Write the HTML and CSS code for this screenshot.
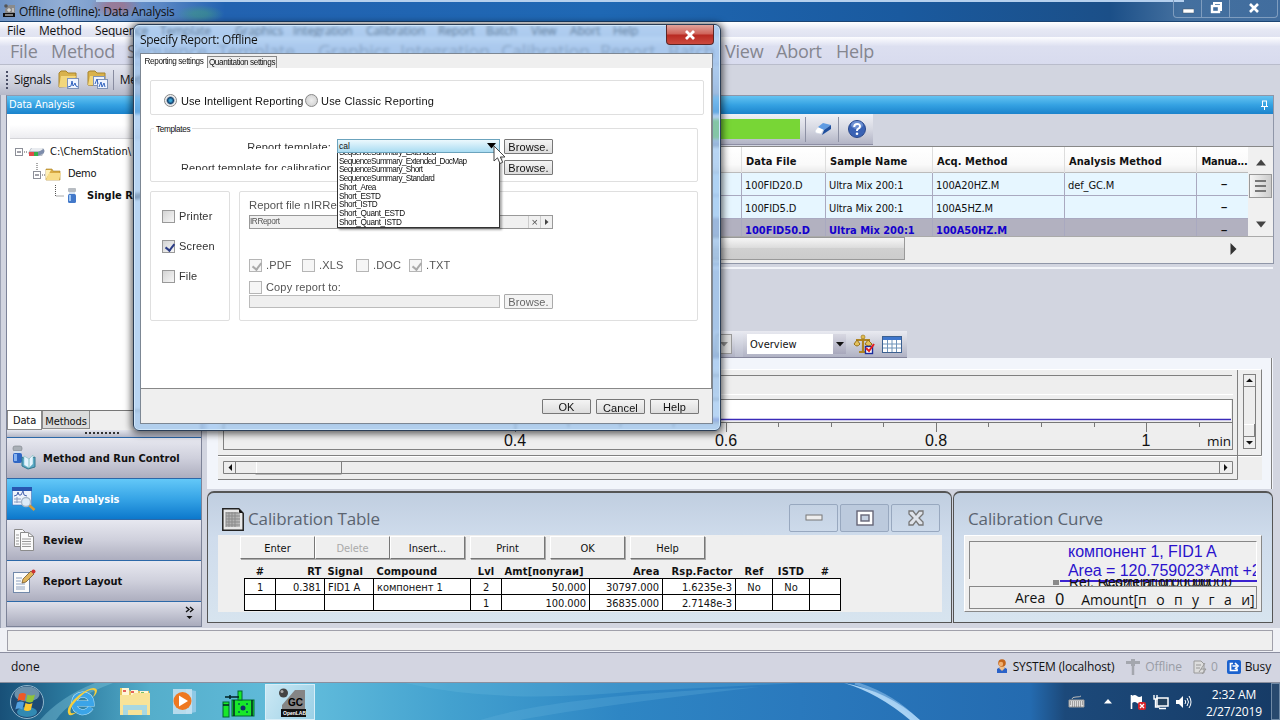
FILE: index.html
```html
<!DOCTYPE html>
<html lang="en">
  <head>
    <meta charset="UTF-8" />
    <title>Offline (offline): Data Analysis</title>
    <link rel="stylesheet" href="styles.css">
  </head>
  <body>
    <header class="titlebar">
      <svg class="app-icon" width="13" height="14" viewBox="0 0 13 14">
        <path d="M2 9V5l4-4h6v8z" fill="#8a8a8a"/><circle cx="3" cy="2" r="1.8" fill="#555"/>
        <rect x="0" y="9" width="12" height="4" fill="#111"/><path d="M2 11h8M5 5h2v2H5zM9 5h2M9 7h2" stroke="#eee" fill="none"/>
      </svg>
      <span class="app-title">Offline (offline): Data Analysis</span>
      <div class="win-buttons">
        <span class="wb"><svg width="12" height="14"><rect x="1" y="8" width="11" height="4" fill="#fff" stroke="#456"  stroke-width=".5"/></svg></span>
        <span class="wb"><svg width="14" height="14"><path d="M5 4V2h7v7h-2" fill="none" stroke="#fff" stroke-width="2"/><rect x="3" y="5" width="7" height="6" fill="none" stroke="#fff" stroke-width="2.4"/></svg></span>
        <span class="wb wb-close"><svg width="12" height="14"><path d="M2 3l8 8M10 3l-8 8" stroke="#fff" stroke-width="2.6"/></svg></span>
      </div>
    </header>

    <nav class="menu">
      <span>File</span><span>Method</span><span>Sequence</span><span>Template</span><span>Graphics</span><span>Integration</span><span>Calibration</span><span>Report</span><span>Batch</span><span>View</span><span>Abort</span><span>Help</span>
    </nav>
    <nav class="menu-large">
      <span>File</span><span>Method</span><span>Sequence</span><span>Template</span><span>Graphics</span><span>Integration</span><span>Calibration</span><span>Report</span><span>Batch</span><span>View</span><span>Abort</span><span>Help</span>
    </nav>

    <div class="toolbar">
      <span class="grip"></span>
      <span class="tb-label">Signals</span>
      <svg width="22" height="20" viewBox="0 0 22 20">
        <path d="M1 17V3l2-2h5l2 2h8v13z" fill="#d9b24c" stroke="#a8842c"/><path d="M3 6h15l-3 11H1z" fill="#f3d77c"/>
        <rect x="9.500" y="8.500" width="11" height="10" fill="#eef4ff" stroke="#7f93b8"/><path d="M10 17l3-1 1-5 1 5 1-1 1-2 1 3 2 1" fill="none" stroke="#3465c0"/>
      </svg>
      <svg width="22" height="20" viewBox="0 0 22 20">
        <path d="M1 15V2l2-1h5l2 2h8v13z" fill="#d9b24c" stroke="#a8842c"/><path d="M3 6h15l-3 9H1z" fill="#f3d77c"/>
        <rect x="6.500" y="6.500" width="11" height="9" fill="#eef4ff" stroke="#7f93b8"/><rect x="10.500" y="9.500" width="10" height="9" fill="#eef4ff" stroke="#7f93b8"/><path d="M8 14l2-5 1 5M12 17l2-5 1 5 2-4 1 4" fill="none" stroke="#3465c0"/>
      </svg>
      <span class="tb-sep"></span>
      <span class="tb-label">Method</span>
    </div>

    <main class="workspace">
      <aside class="sidebar">
        <div class="panel-head">Data Analysis</div>
        <div class="tree">
          <div class="tree-filter"></div>
          <div class="node">
            <svg width="32" height="16" viewBox="0 0 32 16">
              <rect x="1.500" y="4.500" width="7" height="7" fill="#fff" stroke="#8c8f98"/><path d="M3 8h4" stroke="#445"/><path d="M10 8h4" stroke="#555" stroke-dasharray="1 1"/>
              <path d="M14 9l3-5h12l2 3-3 5H16z" fill="#b8bec8"/><path d="M18 4h11l-2 3H16z" fill="#e9ecf0"/><rect x="15" y="8" width="5" height="4" fill="#e24b4b"/><rect x="20" y="8" width="4" height="4" fill="#36b14a"/><path d="M24 12V8l6-3v4z" fill="#7d8cab"/>
            </svg><span>C:\ChemStation\</span>
          </div>
          <div class="node node-2">
            <svg width="30" height="22" viewBox="0 0 30 22">
              <path d="M5 0v8" stroke="#555" stroke-dasharray="1 1"/><rect x="1.500" y="8.500" width="7" height="7" fill="#fff" stroke="#8c8f98"/><path d="M3 12h4" stroke="#445"/><path d="M10 12h4" stroke="#555" stroke-dasharray="1 1"/>
              <path d="M14 17V6h6l1 2h7v9z" fill="#d9ab45" stroke="#a87f24" stroke-width=".6"/><path d="M14 17l3-7h12l-2 7z" fill="#f8dc88"/><path d="M14 16V7h5z" fill="#fff0b5"/>
            </svg><span>Demo</span>
          </div>
          <div class="node node-3">
            <svg width="24" height="22" viewBox="0 0 24 22">
              <path d="M1.500 0v11h8" fill="none" stroke="#555" stroke-dasharray="1 1"/>
              <rect x="14" y="3" width="8" height="4" rx="1" fill="#b7bcc2"/><rect x="15" y="7" width="6" height="3" fill="#d8e4f2"/><rect x="14" y="9" width="8" height="9" rx="1.500" fill="#4278c9"/><rect x="15" y="10" width="2" height="6" fill="#9cc4f2"/>
            </svg><b>Single Runs</b>
          </div>
        </div>
        <div class="side-tabs"><span class="side-tab on">Data</span><span class="side-tab">Methods</span></div>
        <div class="side-grip"><i></i></div>
        <div class="nav-item">
          <svg width="24" height="26" viewBox="0 0 24 26">
            <rect x="1" y="1" width="9" height="5" rx="2" fill="#a9afb6" stroke="#7b8087" stroke-width=".6"/><rect x="2" y="6" width="7" height="4" fill="#d3e0ee"/><rect x="1" y="8" width="9" height="10" rx="2" fill="#2f66c4"/><rect x="2" y="9" width="3" height="7" fill="#86b2f0"/>
            <path d="M10 12l5 3 8-3v10l-7 2-6-3z" fill="#5aa8c8" stroke="#34788e"/><path d="M12 11l5 3v9l-5-3zM17 14l4-4v9l-4 4z" fill="#e4f4ff" stroke="#7bb" stroke-width=".5"/>
          </svg><span>Method and Run Control</span>
        </div>
        <div class="nav-item active">
          <svg width="24" height="26" viewBox="0 0 24 26">
            <rect x=".5" y="2" width="19" height="17" fill="#eef3fb" stroke="#4a70b8" stroke-width=".6"/><rect x="0" y="1" width="20" height="4" fill="#2856b0"/><path d="M2 10l3-1 1-3 1 3h2l2-4 1 4 3 1" fill="none" stroke="#4a66b0"/><path d="M2 13h7M2 16h7M5 11v6" stroke="#8a9cc0"/>
            <circle cx="14" cy="16" r="4.500" fill="#dcebf8" stroke="#a6b6c6" stroke-width="1.300"/><path d="M17.500 19.500l5 4.500" stroke="#d89a35" stroke-width="2.600"/>
          </svg><span>Data Analysis</span>
        </div>
        <div class="nav-item">
          <svg width="24" height="26" viewBox="0 0 24 26">
            <path d="M2.500 2.500h8l4 4v13h-12z" fill="#fafafa" stroke="#8b8b8b"/><path d="M4 8h3M4 11h3M4 14h3M4 17h3" stroke="#999"/><path d="M8.500 5.500h8l5 4v14h-13z" fill="#fafafa" stroke="#8b8b8b"/><path d="M16.500 5.500v4h5M10 12h9M10 14.500h9M10 17h9M10 19.500h9" fill="none" stroke="#999"/>
          </svg><span>Review</span>
        </div>
        <div class="nav-item">
          <svg width="24" height="26" viewBox="0 0 24 26">
            <rect x="1.500" y="4.500" width="16" height="20" fill="#fbfbfb" stroke="#7289aa"/><path d="M4 10h6M4 13h5M4 16h9M4 19h9M4 21h9" stroke="#8ea2c0"/>
            <path d="M10 15l1-4 8-8 3 3-8 8z" fill="#e0b45b" stroke="#74572a" stroke-width=".8"/><circle cx="21.500" cy="3.500" r="2" fill="#c33"/>
          </svg><span>Report Layout</span>
        </div>
        <div class="nav-foot"><svg width="9" height="14"><path d="M1 1l3 2.500L1 6M5 1l3 2.500L5 6" fill="none" stroke="#111" stroke-width="1.400"/><path d="M1.500 10h6l-3 3z" fill="#111"/></svg></div>
      </aside>

      <section class="content">
        <div class="results">
          <div class="panel-head"><svg class="pin" width="9" height="10"><path d="M2 1h5M2.500 1v5M6.500 1v5M1 6.500h7M4.500 7v3" stroke="#fff" fill="none"/></svg></div>
          <div class="results-bar">
            <div class="bar-strip">
              <span class="progress"></span>
              <span class="bar-sep"></span>
              <svg width="18" height="14" viewBox="0 0 18 14"><path d="M1 9l3-4 6 2-3 5-5-1z" fill="#fff" stroke="#cbd3e2" stroke-width=".6"/><path d="M4 5l5-4 8 2-7 5z" fill="#5f9be2"/><path d="M10 8l7-5v4l-9 6z" fill="#1f4f9e"/></svg>
              <span class="bar-sep"></span>
              <svg width="20" height="20" viewBox="0 0 20 20"><circle cx="10" cy="10" r="8.500" fill="#3a62b4" stroke="#29488c"/><ellipse cx="10" cy="6" rx="6" ry="4" fill="#6d90d2"/><path d="M7.200 8q0-3 3-3t2.800 2.500q0 1.500-1.600 2.200T10 12" fill="none" stroke="#fff" stroke-width="2"/><circle cx="10" cy="14.700" r="1.300" fill="#fff"/></svg>
            </div>
          </div>
          <div class="results-body">
            <div class="grid-wrap">
              <div class="grid-row grid-head"><span></span><span>Data File</span><span>Sample Name</span><span>Acq. Method</span><span>Analysis Method</span><span>Manua...</span></div>
              <div class="grid-row"><span></span><span>100FID20.D</span><span>Ultra Mix 200:1</span><span>100A20HZ.M</span><span>def_GC.M</span><span class="dash">–</span></div>
              <div class="grid-row"><span></span><span>100FID5.D</span><span>Ultra Mix 200:1</span><span>100A5HZ.M</span><span></span><span class="dash">–</span></div>
              <div class="grid-row selected"><span></span><span>100FID50.D</span><span>Ultra Mix 200:1</span><span>100A50HZ.M</span><span></span><span class="dash">–</span></div>
            </div>
            <div class="vscroll">
              <svg width="12" height="7"><path d="M1 6.500L6 .5l5 6z" fill="#444"/></svg>
              <span class="vthumb"><i></i><i></i><i></i></span>
              <svg width="12" height="7"><path d="M1 .5h10l-5 6z" fill="#444"/></svg>
            </div>
          </div>
          <div class="hscroll"><span class="hthumb"></span><svg width="7" height="12"><path d="M.5 0v12l6-6z" fill="#333"/></svg></div>
        </div>

        <div class="signal">
          <div class="signal-bar">
            <div class="signal-tools">
              <span class="mini-drop"><svg width="8" height="5"><path d="M0 0h8l-4 4.500z" fill="#888"/></svg></span>
              <span class="handle"></span>
              <span class="select">Overview<i><svg width="8" height="5"><path d="M0 0h8l-4 4.500z" fill="#111"/></svg></i></span>
              <svg class="scales" width="22" height="21" viewBox="0 0 22 21"><path d="M10 2v15M3 6h14M6 18h8" stroke="#b08420" stroke-width="2.200"/><circle cx="10" cy="3" r="2" fill="#dfbb50" stroke="#96701a" stroke-width=".6"/><path d="M1 10l3-4 3 4q-3 4-6 0zM12 10l3-4 4 4q-3 4-7 0z" fill="#e4c15c" stroke="#96701a"/><rect x="12.500" y="12.500" width="7" height="7" fill="#fff" stroke="#1a2c9c" stroke-width="1.400"/><path d="M13 14l3 3 5-7" fill="none" stroke="#e31d1d" stroke-width="2"/></svg>
              <svg width="20" height="17" viewBox="0 0 20 17"><rect x=".5" y=".5" width="19" height="16" fill="#fff" stroke="#3c6090"/><rect x="1" y="1" width="18" height="3" fill="#3f76cc"/><path d="M1 8h18M1 12h18M5.500 4v12M10 4v12M14.500 4v12" stroke="#6f93b8"/></svg>
            </div>
          </div>
          <div class="scope">
            <svg class="chart" width="1065" height="131" viewBox="207 358 1065 131">
              <rect x="218" y="369" width="1044" height="111" fill="#eee"/>
              <path d="M218 369.500h1044M218 456.500h1044M223 394.500h1010" stroke="#fff"/>
              <path d="M223 375.500h1009M218 455.500h1043.500v-86M1237.500 370v109.500H218M1271.500 358v131" fill="none" stroke="#808080"/>
              <rect x="223.500" y="399.500" width="1009" height="50" fill="#eee" stroke="#808080"/>
              <rect x="224" y="400" width="1007" height="21" fill="#fff"/>
              <path d="M224 419.500h1007" stroke="#3a2ab8" stroke-width="1.400"/>
              <path d="M224 422.500h1008M515.500 423v9M726.500 423v9M936.500 423v9M1146.500 423v9M568.500 423v4M620.500 423v4M673.500 423v4M778.500 423v4M831.500 423v4M883.500 423v4M988.500 423v4M1041.500 423v4M1094.500 423v4M1199.500 423v4" stroke="#777"/>
              <g class="ticks"><text x="515" y="446">0.4</text><text x="726" y="446">0.6</text><text x="936" y="446">0.8</text><text x="1146" y="446">1</text><text x="1219" y="446" class="unit">min</text></g>
              <path d="M223.500 461.500h1009v12h-1009z" fill="#eee" stroke="#808080"/>
              <path d="M235.500 461v13M341.500 462v12h-86M1219.500 462v11" fill="none" stroke="#808080"/><path d="M256.500 473v-11" stroke="#fff"/>
              <path d="M232 464v7l-3.500-3.500zM1224 464v7l3.500-3.500z" fill="#111"/>
              <rect x="1243.500" y="374.500" width="12" height="74" fill="#eee" stroke="#808080"/><path d="M1244 386.500h11M1244 436.500h11M1254.500 424v12" stroke="#808080"/><path d="M1244 424.500h10" stroke="#fff"/>
              <path d="M1246 382h7l-3.500-3.500zM1246 441h7l-3.500 3.500z" fill="#111"/>
            </svg>
          </div>
        </div>

        <div class="mdi">
          <section class="mdi-win cal-table">
            <div class="mdi-title">
              <svg width="22" height="23" viewBox="0 0 22 23"><path d="M.8.8h16l4.400 4.400v17H.8z" fill="#e8e8e8" stroke="#222" stroke-width="1.500"/><path d="M17 1v4h4z" fill="#111"/><path d="M4 4h12v15H4z" fill="#b4b4b4"/><path d="M4 5h14M4 8h14M4 11h14M4 14h14M4 17h14M4 4v15M7 4v15M10 4v15M13 4v15M17 5v14" stroke="#8b8b8b"/></svg>
              <h2>Calibration Table</h2>
              <div class="mdi-buttons">
                <span><svg width="18" height="8"><rect x="1" y="1" width="16" height="5" fill="#eee" stroke="#777"/></svg></span>
                <span class="mid"><svg width="18" height="16"><rect x="1" y="1" width="16" height="14" fill="#fff" stroke="#667" stroke-width="1.400"/><rect x="5" y="5" width="8" height="6" fill="#c5d0e0" stroke="#667" stroke-width="1.400"/></svg></span>
                <span><svg width="20" height="18"><path d="M3 2h4l3 4 3-4h4v3l-4 4 4 4v3h-4l-3-4-3 4H3v-3l4-4-4-4z" fill="#dfe3ea" stroke="#777" stroke-width="1.300"/></svg></span>
              </div>
            </div>
            <div class="mdi-body">
              <div class="btn-row"><span>Enter</span><span class="off">Delete</span><span>Insert...</span><span class="gap">Print</span><span class="gap">OK</span><span class="gap">Help</span></div>
              <table class="cal">
                <colgroup><col class="w31"><col class="w49"><col class="w49"><col class="w97"><col class="w31"><col class="w88"><col class="w73"><col class="w73"><col class="w37"><col class="w37"><col class="w31"></colgroup>
                <thead><tr><th class="c">#</th><th class="r">RT</th><th>Signal</th><th>Compound</th><th class="c">Lvl</th><th class="amt">Amt[попугаи]</th><th class="r">Area</th><th class="r">Rsp.Factor</th><th class="c">Ref</th><th class="c">ISTD</th><th class="c">#</th></tr></thead>
                <tbody>
                  <tr><td class="c">1</td><td class="r">0.381</td><td class="sig">FID1 A</td><td class="comp">компонент 1</td><td class="c">2</td><td class="r">50.000</td><td class="r">30797.000</td><td class="r">1.6235e-3</td><td class="c">No</td><td class="c">No</td><td></td></tr>
                  <tr><td></td><td></td><td></td><td></td><td class="c">1</td><td class="r">100.000</td><td class="r">36835.000</td><td class="r">2.7148e-3</td><td></td><td></td><td></td></tr>
                </tbody>
              </table>
            </div>
          </section>
          <section class="mdi-win cal-curve">
            <div class="mdi-title"><h2>Calibration Curve</h2></div>
            <div class="curve-body">
              <div class="curve-eq"><div>компонент 1, FID1 A</div><div class="eq">Area = 120.759023*Amt +2</div></div>
              <div class="curve-mid"><span>Rel. Res%(1): 0.00000</span><span class="over">Correlation: 1.00000</span></div>
              <div class="curve-axis"><span class="ax-area">Area</span><span class="ax-zero">0</span><span class="ax-amt">Amount[<em>попуга</em>и]</span></div>
            </div>
          </section>
        </div>
      </section>
    </main>

    <div class="message-strip"><div></div></div>

    <footer class="statusbar">
      <span class="done">done</span>
      <svg width="12" height="15" viewBox="0 0 12 15"><path d="M1 14V10l3-2h4l3 2v4z" fill="#2a62c8"/><path d="M3 9l3 3 3-3-1-2H4z" fill="#f0c08a"/><circle cx="6" cy="4" r="3.800" fill="#c4661a"/><circle cx="5" cy="5" r="2.200" fill="#f0b070"/></svg>
      <span class="st-sys">SYSTEM (localhost)</span>
      <svg width="16" height="16" viewBox="0 0 16 16"><path d="M1 2h14v3H1zM6 0h4v7H6z" fill="#a4a7ae"/><path d="M8 6v10" stroke="#a4a7ae" stroke-width="2.500"/></svg>
      <span class="st-off">Offline</span>
      <svg width="14" height="16" viewBox="0 0 14 16"><path d="M1 2h7l3 3v9H1z" fill="#ddd" stroke="#999"/><path d="M3 6h5M3 9h4M6 13l6-9M8 10h5l-4 5" stroke="#999" fill="none"/></svg>
      <span class="st-num">0</span>
      <svg width="14" height="14" viewBox="0 0 14 14"><rect width="14" height="14" rx="2" fill="#1b62ce"/><path d="M6 3.500H3.500v7H10V8.500M5.500 6h4M8 3l3 3-3 3" fill="none" stroke="#fff" stroke-width="1.700"/></svg>
      <span class="st-busy">Busy</span>
    </footer>

    <footer class="taskbar">
      <svg class="streaks" width="1280" height="37" viewBox="0 0 1280 37">
        <path d="M40 37Q60 14 95 0h18Q70 16 56 37z" fill="#7cc3da" opacity=".45"/>
        <path d="M405 0Q500 22 640 8L800 0H405z" fill="#7cc8e8" opacity=".2"/><path d="M480 37Q560 12 760 4 600 22 520 37z" fill="#6cb8e0" opacity=".25"/>
        <path d="M844 0q44 8 76 37h-10Q878 10 844 0z" fill="#a8d2f4"/><path d="M855 0q38 12 62 37" stroke="#9cc9f2" stroke-width="3" fill="none" opacity=".5"/>
      </svg>
      <span class="start">
        <svg width="36" height="36" viewBox="0 0 36 36"><circle cx="18" cy="18" r="16.500" fill="#1c4a74" stroke="#8fb6cc"/><ellipse cx="18" cy="10" rx="12.500" ry="7.500" fill="#86a9be" opacity=".75"/><ellipse cx="18" cy="28" rx="10" ry="5" fill="#3fb4dc" opacity=".6"/><path d="M10 10q4-2 7 0l-1.500 7q-4-2-7 0z" fill="#ee5a26"/><path d="M18.500 10.500q4 2 7.500 0l-2 7q-3 2-7 0z" fill="#8fc33a"/><path d="M8 18.500q4-2 7 0l-1.700 7q-4-2-7 0z" fill="#52a0e0"/><path d="M16.500 19q4 2 7 0l-1.700 7q-3.500 2-7 0z" fill="#fcc72c"/></svg>
      </span>
      <svg class="t-ie" width="34" height="32" viewBox="0 0 34 32"><path d="M26 21.500Q22 27 16 26 9 24 9 17 10 9 17.500 8.500 26 9 26.500 17.500H10" fill="none" stroke="#b9e6fb" stroke-width="6"/><path d="M26 21.500Q22 27 16 26 9 24 9 17 10 9 17.500 8.500 26 9 26.500 17.500H10" fill="none" stroke="#3ba4e8" stroke-width="5"/><path d="M4 29Q-1 22 14 9 29-2 32 4q0 4-4 7 3-5 1-7-5-2-14 7Q3 22 6 27q3 1 7-2-5 5-9 4z" fill="#f6ce3c"/></svg>
      <svg class="t-folder" width="32" height="31" viewBox="0 0 32 31"><path d="M1 28V2h8l2 3h19v23z" fill="#e6c75e"/><path d="M3 2h7v7H3zM12 4h7v5h-7zM21 5h8v5h-8z" fill="#fff6d5"/><path d="M12 6h3M4 5h3" stroke="#d33" stroke-width="1.500"/><path d="M22 7h3" stroke="#4a4" stroke-width="1.500"/><path d="M1 9h12l2-2h16v22H1z" fill="#f8e398"/><path d="M4 29V19h24v10h-5v-5H9v5z" fill="#9ed6ea" opacity=".9"/></svg>
      <svg class="t-media" width="26" height="27" viewBox="0 0 26 27"><path d="M14 1l10 2v21l-10 2z" fill="#8ec9e6"/><rect x="1" y="1" width="19" height="25" fill="#c7e3f1" opacity=".85"/><circle cx="10.500" cy="13" r="9" fill="#ee7820"/><path d="M7 7.500l9 5.500-9 5.500z" fill="#fff"/></svg>
      <svg class="t-gc" width="34" height="29" viewBox="0 0 34 29"><g fill="#18e82a" stroke="#063" ><rect x="1" y="12" width="6" height="15"/><rect x="10" y="10" width="22" height="16"/><rect x="16" y="1" width="4" height="9"/></g><path d="M3 7h14M8 5v4M12 10v16M30 10v16M1 15h6" stroke="#022" stroke-width="1.500"/><circle cx="21" cy="18" r="2.500" fill="#136"/><path d="M16 13h2v2h-2zM24 13h2v2h-2zM16 21h2v2h-2zM24 21h2v2h-2z" fill="#084"/></svg>
      <span class="task-active">
        <svg width="28" height="32" viewBox="0 0 28 32"><path d="M4 24V18L17 3h10v21z" fill="#858585"/><circle cx="5.500" cy="6" r="4.500" fill="#444"/><circle cx="4" cy="4.500" r="1.500" fill="#aaa"/><rect x="3" y="22" width="25" height="8" fill="#111"/><text x="10" y="19" class="gc">GC</text><text x="5" y="28" class="lab">OpenLAB</text></svg>
      </span>
      <div class="tray">
        <svg width="17" height="14" viewBox="0 0 17 14"><path d="M1 5h15v7H1z" fill="#ddd" stroke="#999"/><path d="M2 7h13M2 9h13M4 11h9" stroke="#666" stroke-dasharray="1 1"/><path d="M4 4q0-2 4-2t5-1" stroke="#bbb" fill="none"/></svg>
        <svg class="up" width="8" height="5"><path d="M0 4.500h8L4 0z" fill="#fff"/></svg>
        <svg width="16" height="16" viewBox="0 0 16 16"><path d="M1.500 1v14" stroke="#fff" stroke-width="1.600"/><path d="M2 2q3-2 5 0t5 0v7q-3 2-5 0t-5 0z" fill="#fff"/><rect x="8" y="8" width="8" height="8" rx="2" fill="#d6232b"/><path d="M10 10l4 4M14 10l-4 4" stroke="#fff" stroke-width="1.300"/></svg>
        <svg width="16" height="16" viewBox="0 0 16 16"><rect x="4" y="4" width="11" height="8" fill="#24425f" stroke="#fff" stroke-width="1.500"/><path d="M6 14.500h7M1 1v4h3V1M2.500 5v8h4" stroke="#fff" stroke-width="1.400" fill="none"/></svg>
        <svg width="16" height="14" viewBox="0 0 16 14"><path d="M0 5h3l4-4v12L3 9H0z" fill="#fff"/><path d="M9 5q1.500 2 0 4M11 3q3 4 0 8M13 1q4 6 0 12" stroke="#fff" fill="none"/></svg>
      </div>
      <div class="clock"><span>2:32 AM</span><span>2/27/2019</span></div>
      <span class="show-desktop"></span>
    </footer>

    <div class="dialog">
      <div class="dlg-title"><span>Specify Report: Offline</span><span class="dlg-close"><svg width="12" height="12"><path d="M2 2l8 8M10 2l-8 8" stroke="#fff" stroke-width="2.800"/></svg></span></div>
      <div class="dlg-client">
        <div class="tabs"><span class="tab on">Reporting settings</span><span class="tab">Quantitation settings</span></div>
        <div class="page">
          <div class="group kind">
            <i class="radio on"></i><span class="use-int">Use Intelligent Reporting</span><i class="radio"></i><span class="use-cla">Use Classic Reporting</span>
          </div>
          <div class="group templates">
            <span class="legend">Templates</span>
            <div class="tpl-row">
              <span class="clip">Report template:</span>
              <div class="combo"><span>cal</span><svg width="9" height="6"><path d="M0 0h9L4.500 5.500z" fill="#000"/></svg>
                <ul class="drop"><li>SequenceSummary_Extended</li><li>SequenceSummary_Extended_DocMap</li><li>SequenceSummary_Short</li><li>SequenceSummary_Standard</li><li>Short_Area</li><li>Short_ESTD</li><li>Short_ISTD</li><li>Short_Quant_ESTD</li><li>Short_Quant_ISTD</li></ul>
              </div>
              <span class="btn">Browse.</span>
            </div>
            <div class="tpl-row">
              <span class="clip">Report template for calibration</span>
              <div class="combo-space"></div>
              <span class="btn">Browse.</span>
            </div>
          </div>
          <div class="dest">
            <div class="group outputs">
              <label><i class="chk"></i>Printer</label>
              <label><i class="chk on"></i>Screen</label>
              <label><i class="chk"></i>File</label>
            </div>
            <div class="group file">
              <div class="file-name">Report file n<span>IRRe</span></div>
              <div class="file-input"><span class="val">IRReport</span><span class="mini">×</span><span class="mini"><svg width="4" height="6"><path d="M0 0v6l3.500-3z" fill="#444"/></svg></span></div>
              <div class="formats">
                <label><i class="chk dim on"></i>.PDF</label><label><i class="chk dim"></i>.XLS</label><label><i class="chk dim"></i>.DOC</label><label><i class="chk dim on"></i>.TXT</label>
              </div>
              <label class="copy"><i class="chk dim"></i>Copy report to:</label>
              <div class="copy-row"><span class="copy-input"></span><span class="btn dim">Browse.</span></div>
            </div>
          </div>
        </div>
        <div class="dlg-foot"><span class="btn">OK</span><span class="btn low">Cancel</span><span class="btn">Help</span></div>
      </div>
    </div>

    <svg class="cursor" width="14" height="20" viewBox="0 0 14 20"><path d="M1 1v15l3.500-3.200L7 18.500l2.700-1.200-2.400-5.300H12z" fill="#fff" stroke="#444"/></svg>
  </body>
</html>
```
FILE: styles.css
```css
* {
  box-sizing: border-box;
}

body {
  margin: 0;
  width: 1280px;
  height: 720px;
  overflow: hidden;
  display: flex;
  flex-direction: column;
  position: relative;
  background: #d2d5e0;
  color: #111;
  font: 11px/14px "DejaVu Sans Condensed", "DejaVu Sans", sans-serif;
  font-stretch: condensed;
  white-space: nowrap;
}

svg {
  display: block;
  flex: none;
}

h2,
ul {
  margin: 0;
  padding: 0;
}

/* window frame */
.titlebar {
  height: 22px;
  flex: none;
  display: flex;
  align-items: center;
  padding-left: 3px;
  border-bottom: 1px solid #1b4473;
  background:
    linear-gradient(#b5d0ee, #b5d0ee) 96px 0 / 1088px 2px no-repeat,
    radial-gradient(ellipse 26px 12px at 116px 6px, #a86c80aa 30%, transparent),
    radial-gradient(ellipse 24px 9px at 200px 14px, #3f9a8088 30%, transparent),
    linear-gradient(90deg, #6f93c4, #91add4 60px, #5a87c4 160px, #2262b0 225px, #1f68b4 600px, #1a5a9f 900px, #1b4f88 1110px, #44709f 1180px, #416d9e);
}

.app-title {
  font: 12px/20px "Open Sans", sans-serif;
  letter-spacing: -0.27px;
  margin-left: 3px;
  padding-top: 2px;
}

.win-buttons {
  margin: 0 2px 4px auto;
  display: flex;
  height: 18px;
  border: 1px solid #7f9dbf;
  border-top: 0;
  border-radius: 0 0 4px 4px;
}

.wb {
  width: 28px;
  display: flex;
  align-items: center;
  justify-content: center;
  border-right: 1px solid #7f9dbf;
}

.wb-close {
  width: 47px;
  border: 0;
}

.menu {
  height: 15px;
  flex: none;
  padding-left: 7px;
  display: grid;
  grid-template-columns: 32px 56px 65px 75px 58px 73px 72px 48px 45px 39px 43px 40px;
  font: 12px/18px "Open Sans", sans-serif;
  letter-spacing: -0.2px;
  background: linear-gradient(#fff, #e6e8f4 50%, #dfe2f0);
}

.menu-large {
  height: 28px;
  flex: none;
  padding-left: 10px;
  display: grid;
  grid-template-columns: 41px 76px 91px 100px 82px 101px 99px 68px 57px 51px 60px 60px;
  font: 18px/28px "Open Sans", sans-serif;
  letter-spacing: -0.25px;
  color: #85868f;
  border-bottom: 1px solid #b9bccb;
  background: linear-gradient(#fdfdff, #dcdff0 35%, #d8dbee);
}

.toolbar {
  height: 30px;
  flex: none;
  width: 720px;
  padding: 0 6px;
  display: flex;
  align-items: center;
  background: linear-gradient(#e4e6f0, #cdd0dd 60%, #b6b9c9);
}

.grip {
  width: 2px;
  height: 19px;
  margin-right: 6px;
  background: repeating-linear-gradient(#4b4f66 0 2px, transparent 2px 4px);
}

.tb-label {
  font: 12px/18px "Open Sans", sans-serif;
  letter-spacing: -0.3px;
}

.toolbar svg {
  margin-left: 7px;
}

.tb-sep {
  width: 1px;
  height: 20px;
  margin: 0 6px 0 4px;
  background: #888ca0;
}

.workspace {
  height: 533px;
  flex: none;
  display: flex;
  padding-left: 5px;
  border-left: 1px solid #9ba1b3;
}

.sidebar {
  width: 196px;
  height: 532px;
  display: flex;
  flex-direction: column;
  border: 1px solid #7d8398;
  border-top: 1px solid #8f9ab0;
}

.panel-head {
  height: 18px;
  flex: none;
  padding: 0 4px 0 2px;
  display: flex;
  align-items: center;
  color: #fff;
  line-height: 22px;
  letter-spacing: -0.15px;
  background: linear-gradient(#64c3f2, #35a2e2 50%, #1b83cc);
}

.pin {
  margin-left: auto;
}

.tree {
  height: 296px;
  flex: none;
  padding: 11px 0 0 3px;
  background: #fff;
  overflow: hidden;
}

.tree-filter {
  height: 14px;
  border-bottom: 1px solid #d4d4d8;
  background: linear-gradient(#fff, #ececf0);
}

.node {
  height: 22px;
  margin-top: 2px;
  padding-left: 4px;
  display: flex;
  align-items: center;
  gap: 4px;
}

.node-2 {
  margin-top: 0;
  padding-left: 22px;
  gap: 6px;
  letter-spacing: -0.3px;
}

.node-3 {
  margin-top: 0;
  padding-left: 44px;
  gap: 9px;
}

.side-tabs {
  height: 20px;
  flex: none;
  display: flex;
  border-top: 1px solid #777;
  background: #efefef;
}

.side-tab {
  width: 48px;
  height: 18px;
  line-height: 21px;
  text-align: center;
  border: 1px solid #8b8b8b;
  border-top: 0;
  letter-spacing: -0.1px;
  background: #dcdcdc;
}

.side-tab.on {
  width: 35px;
  height: 19px;
  line-height: 20px;
  background: #fff;
}

.side-grip {
  height: 7px;
  flex: none;
  padding: 2px 0 0 78px;
  background: linear-gradient(#e4e6ee, #b4b7c6);
}

.side-grip i {
  display: block;
  width: 34px;
  height: 2px;
  background: repeating-linear-gradient(90deg, #333 0 2px, transparent 2px 4px);
}

.nav-item {
  height: 41px;
  flex: none;
  padding-left: 5px;
  display: flex;
  align-items: center;
  gap: 7px;
  font-weight: bold;
  line-height: 16px;
  letter-spacing: 0.03px;
  border-top: 1px solid #2c68a8;
  background: linear-gradient(#e7e8f0, #cfd0dc 50%, #adaebf);
}

.nav-item span {
  padding-top: 1px;
}

.nav-item.active {
  color: #fff;
  background: linear-gradient(#63c8f8, #36a4e6 50%, #0c78cc);
}

.nav-foot {
  flex: 1;
  padding: 4px 7px 0;
  display: flex;
  justify-content: flex-end;
  border-top: 1px solid #2c68a8;
  background: linear-gradient(#dfe0ea, #a9abbc);
}

/* results list */
.content {
  width: 1068px;
  margin-left: 4px;
  padding-left: 1px;
  display: flex;
  flex-direction: column;
}

.results {
  width: 1067px;
  height: 169px;
  flex: none;
  border: 1px solid #8f96a8;
}

.results-bar {
  height: 32px;
  background: #d2d5e0;
}

.bar-strip {
  width: 665px;
  height: 31px;
  padding-left: 392px;
  display: flex;
  align-items: center;
  border-bottom: 1px solid #8d8ea4;
  background: linear-gradient(#f0f1f6, #d6d8e2 50%, #b2b4c5);
}

.progress {
  width: 200px;
  height: 20px;
  background: #78d636;
}

.bar-sep {
  width: 1px;
  height: 25px;
  margin: 0 8px 0 5px;
  background: #8d91a4;
}

.bar-strip svg + .bar-sep {
  margin: 0 8px 0 6px;
}

.results-body {
  height: 90px;
  display: flex;
  border-top: 1px solid #888;
  background: #eee;
}

.grid-wrap {
  width: 1040px;
  overflow: hidden;
}

.grid-row {
  height: 23px;
  display: grid;
  grid-template-columns: 534px 84px 107px 132px 132px 51px;
  line-height: 25px;
  letter-spacing: -0.1px;
  border-bottom: 1px solid #a9a9c0;
  background: #e6f6ff;
}

.grid-row span {
  padding-left: 3px;
  border-right: 1px solid #a9a9c0;
}

.grid-row span:last-child {
  text-align: center;
  border: 0;
}

.grid-row .dash {
  font-size: 15px;
  line-height: 23px;
}

.grid-head {
  height: 26px;
  line-height: 29px;
  font-weight: bold;
  letter-spacing: 0.05px;
  border-bottom-color: #bbb;
  background: linear-gradient(#fff, #fafafa 70%, #ebebeb);
}

.grid-head span {
  padding-left: 4px;
  border-color: #ddd;
}

.grid-head span:last-child {
  letter-spacing: -0.35px;
}

.selected {
  color: #1400cc;
  font-weight: bold;
  line-height: 24px;
  letter-spacing: 0;
  background: #b2b1c0;
}

.selected span:last-child {
  color: #111;
  font-weight: normal;
}

.vscroll {
  flex: 1;
  padding: 12px 0 0;
  display: flex;
  flex-direction: column;
  align-items: center;
  background: #f0f0f0;
}

.vthumb {
  width: 23px;
  height: 24px;
  margin: 8px 0 23px;
  padding: 5px;
  display: flex;
  flex-direction: column;
  justify-content: space-between;
  border: 1px solid #999;
  background: linear-gradient(90deg, #f5f5f5, #ccc);
}

.vthumb i {
  height: 2px;
  background: #777;
}

.hscroll {
  height: 27px;
  padding: 0 36px 3px 0;
  display: flex;
  align-items: center;
  justify-content: space-between;
  border-top: 1px solid #aaa;
  background: #eee;
}

.hthumb {
  width: 697px;
  height: 23px;
  border: 1px solid #999;
  background: linear-gradient(#f6f6f6, #ddd 45%, #d0d0d0 50%, #ccc);
}

/* chromatogram */
.signal {
  height: 225px;
  flex: none;
  padding-top: 3px;
  width: 1066px;
}

.signal-bar {
  height: 91px;
  border-top: 2px solid #f2f4f9;
  padding-top: 62px;
}

.signal-tools {
  width: 700px;
  height: 27px;
  padding-left: 509px;
  display: flex;
  align-items: center;
  border-bottom: 1px solid #85869c;
  background: linear-gradient(#e9eaf1, #cdcfda 50%, #b0b2c4);
}

.mini-drop {
  width: 16px;
  height: 20px;
  display: flex;
  align-items: center;
  justify-content: center;
  border: 1px solid #999;
  background: #ddd;
}

.handle {
  width: 8px;
  height: 25px;
  margin: 0 4px 0 3px;
  background: linear-gradient(#e6e8f0, #b9bccc);
}

.select {
  width: 99px;
  height: 20px;
  padding-left: 3px;
  display: flex;
  justify-content: space-between;
  line-height: 22px;
  background: #fff;
}

.select i {
  width: 13px;
  display: flex;
  align-items: center;
  justify-content: center;
  background: linear-gradient(#d8d8e2, #a8a8bc);
}

.scales {
  margin: 0 7px 0 7px;
}

.scope {
  height: 131px;
  background: #f2f5fb;
}

.ticks text {
  font: 16px "Liberation Sans", sans-serif;
  text-anchor: middle;
  fill: #111;
}

.ticks .unit {
  font: 13.5px "Open Sans", sans-serif;
}

/* child windows */
.mdi {
  height: 134px;
  padding: 2px 0 0;
  display: flex;
}

.mdi-win {
  height: 132px;
  border: 1px solid #555;
  border-top-width: 2px;
  border-radius: 7px 7px 0 0;
  background: linear-gradient(#c0cee0, #cfdcec 45px, #d7e4ef);
}

.cal-table {
  width: 745px;
}

.cal-curve {
  width: 320px;
  margin-left: 1px;
}

.mdi-title {
  height: 42px;
  padding: 10px 11px 0 14px;
  display: flex;
  align-items: center;
}

.mdi-title h2 {
  font: 17px/26px "Open Sans", sans-serif;
  letter-spacing: -0.12px;
  color: #5b6470;
}

.cal-table h2 {
  margin-left: 4px;
}

.mdi-buttons {
  margin-left: auto;
  display: flex;
  gap: 2px;
  margin-top: -3px;
}

.mdi-buttons span {
  width: 49px;
  height: 28px;
  display: flex;
  align-items: center;
  justify-content: center;
  border: 1px solid #98a8bf;
  border-radius: 2px;
}

.mdi-buttons .mid {
  background: #bccadd;
}

.mdi-body {
  width: 724px;
  height: 77px;
  margin-left: 10px;
  padding: 1px 0 0 22px;
  background: #efefef;
}

.btn-row {
  display: flex;
  height: 24px;
}

.btn-row span {
  width: 75px;
  height: 23px;
  line-height: 23px;
  text-align: center;
  border: 1px solid;
  border-color: #fff #777 #777 #fff;
  box-shadow: 1px 1px 0 #aaa;
  letter-spacing: -0.05px;
}

.btn-row .gap {
  margin-left: 5px;
}

.btn-row .off {
  color: #aaa;
}

.cal {
  width: 597px;
  margin-left: 4px;
  table-layout: fixed;
  border-collapse: collapse;
  letter-spacing: -0.05px;
}

.cal th,
.cal td {
  height: 16px;
  padding: 2px 3px 0;
  line-height: 13px;
  text-align: left;
}

.cal th {
  height: 18px;
  padding-top: 5px;
  letter-spacing: 0.15px;
}

.cal td {
  border: 1px solid #000;
  background: #fff;
}

.cal .c {
  text-align: center;
  padding-left: 0;
  padding-right: 0;
}

.cal .r {
  text-align: right;
}

.w31 { width: 31px; }
.w49 { width: 49px; }
.w97 { width: 97px; }
.w88 { width: 88px; }
.w73 { width: 73px; }
.w37 { width: 37px; }

.curve-body {
  width: 298px;
  height: 77px;
  margin-left: 10px;
  padding: 5px 4px 0 4px;
  border: 1px solid;
  border-color: #fff #888 #888 #fff;
  background: #efefef;
}

.curve-eq {
  height: 38px;
  padding-left: 98px;
  overflow: hidden;
  border: 1px solid #888;
  border-right-color: #fff;
  border-bottom: 0;
  color: #2a12cc;
  font: 16px/19px "Liberation Sans", sans-serif;
  letter-spacing: -0.05px;
}

.curve-mid {
  height: 7px;
  margin-left: 82px;
  padding: 2px 0 0 18px;
  overflow: hidden;
  display: grid;
  background:
    linear-gradient(#8a8a8a, #8a8a8a) 2px 1px / 6px 5px no-repeat,
    linear-gradient(#3a22d0, #3a22d0) 9px 1px / 200px 2px no-repeat;
  font: 14px/3px "Liberation Sans", sans-serif;
}

.curve-mid span {
  grid-area: 1 / 1;
}

.curve-mid .over {
  padding-left: 36px;
}

.curve-axis {
  height: 23px;
  padding-left: 45px;
  display: flex;
  border: 1px solid #888;
  font: 14px/22px "Open Sans", sans-serif;
}

.ax-zero {
  margin: 0 17px 0 10px;
  font: 16px/25px "Liberation Sans", sans-serif;
}

.ax-amt {
  line-height: 25px;
}

.curve-axis em {
  font-style: normal;
  letter-spacing: 9.4px;
}

.message-strip {
  height: 25px;
  flex: none;
  padding: 2px 7px 2px 7px;
  border-bottom: 1px solid #8b8ea0;
  background: #f0f1f6;
}

.message-strip div {
  height: 21px;
  border: 1px solid #a0a0aa;
  background: #efefef;
}

.statusbar {
  height: 30px;
  flex: none;
  padding: 0 9px 2px 11px;
  display: flex;
  align-items: center;
  border-bottom: 1px solid #8a8f9e;
  background: #d3d5e1;
  font: 12px/18px "Open Sans", sans-serif;
}

.done {
  flex: 1;
}

.st-sys {
  margin: 0 11px 0 5px;
  letter-spacing: -0.15px;
}

.st-off {
  margin: 0 11px 0 4px;
  letter-spacing: -0.15px;
  color: #999ca5;
}

.st-num {
  margin: 0 9px 0 4px;
  color: #999ca5;
}

.st-busy {
  margin-left: 4px;
  letter-spacing: -0.15px;
}

.taskbar {
  height: 37px;
  flex: none;
  position: relative;
  display: flex;
  align-items: center;
  padding-left: 9px;
  background: linear-gradient(90deg, #185078, #2c7ba0 70px, #55aecb 150px, #62bddc 300px, #43a1cf 450px, #2e86c4 620px, #2a79bd 800px, #246bb0 1030px, #1c497a 1065px, #163b66 1280px);
}

.streaks {
  position: absolute;
  left: 0;
  top: 0;
}

.taskbar > *:not(.streaks) {
  position: relative;
}

.t-ie { margin-left: 20px; }
.t-folder { margin-left: 20px; }
.t-media { margin-left: 21px; }
.t-gc { margin-left: 24px; margin-top: 5px; }

.task-active {
  width: 50px;
  height: 36px;
  margin-left: 9px;
  padding: 2px 0 0 12px;
  border: 1px solid #d7eef8;
  background: linear-gradient(120deg, #cbe8f4, #9bd0e6);
}

.gc {
  font: bold 10px "Liberation Sans", sans-serif;
}

.lab {
  font: bold 5px "Liberation Sans", sans-serif;
  fill: #fff;
}

.tray {
  margin-left: auto;
  display: flex;
  align-items: center;
  gap: 7px;
}

.tray .up {
  margin: 0 11px 0 12px;
}

.clock {
  width: 70px;
  margin: 2px 2px 0 7px;
  display: flex;
  flex-direction: column;
  text-align: center;
  color: #fff;
  font: 12px/17px "Open Sans", sans-serif;
  letter-spacing: -0.1px;
}

.show-desktop {
  width: 9px;
  height: 37px;
  border: 1px solid #6f89a5;
  background: #28496e;
}

/* report dialog */
.dialog {
  position: absolute;
  left: 133px;
  top: 24px;
  width: 588px;
  height: 407px;
  padding: 0 7px 7px;
  border: 1px solid #2a3d55;
  border-radius: 6px;
  background: rgba(140, 188, 236, 0.62);
  backdrop-filter: blur(1.5px);
  box-shadow: 0 1px 7px 2px rgba(0, 0, 0, 0.6), inset 0 0 0 1px #cfe6fa;
}

.dlg-title {
  height: 28px;
  display: flex;
  justify-content: space-between;
  font: 12px/30px "Open Sans", sans-serif;
  letter-spacing: -0.3px;
}

.dlg-title > span:first-child {
  margin-left: -1px;
}

.dlg-close {
  width: 48px;
  height: 20px;
  margin-right: -1px;
  display: flex;
  align-items: center;
  justify-content: center;
  border: 1px solid #5c2626;
  border-top: 0;
  border-radius: 0 0 4px 4px;
  background: linear-gradient(#e0a39c, #cf6258 48%, #b82a22 52%, #cc4a3e);
}

.dlg-client {
  height: 371px;
  width: 573px;
  display: flex;
  flex-direction: column;
  margin-left: -1px;
  border: 1px solid #7c8794;
  background: #efefef;
  font: 11px/14px "Liberation Sans", sans-serif;
  font-stretch: normal;
}

.tabs {
  height: 14px;
  flex: none;
  display: flex;
  align-items: flex-end;
  font-size: 8.2px;
  letter-spacing: -0.4px;
}

.tab {
  width: 70px;
  height: 12px;
  text-align: center;
  border: 1px solid #888;
  border-bottom: 0;
  line-height: 12px;
}

.tab.on {
  width: 66px;
  height: 14px;
  border: 0;
  line-height: 15px;
  background: #fff;
}

.page {
  height: 321px;
  flex: none;
  width: 571px;
  padding: 12px 0 0 9px;
  border: 1px solid #888;
  border-width: 0 1px 1px 0;
  background: #fff;
}

.group {
  border: 1px solid #dfdfdf;
  border-radius: 2px;
}

.kind {
  width: 554px;
  height: 35px;
  padding: 6px 0 0 13px;
  display: flex;
  align-items: center;
}

.radio {
  width: 13px;
  height: 13px;
  border: 1px solid #888;
  border-radius: 50%;
  background: radial-gradient(#eee, #ccc);
}

.radio.on {
  background: radial-gradient(#3aa7d8 0 1px, #15406c 3px, #eee 4.5px);
}

.use-int {
  width: 124px;
  margin-left: 4px;
}

.use-cla {
  margin-left: 3px;
}

.outputs label,
.formats label,
.copy,
.clip {
  letter-spacing: 0.15px;
}

.kind .use-int {
  letter-spacing: 0.08px;
}

.kind .use-cla {
  letter-spacing: 0.2px;
}

.templates {
  width: 548px;
  height: 54px;
  margin-top: 13px;
  position: relative;
  padding: 10px 0 0 30px;
}

.legend {
  position: absolute;
  left: 3px;
  top: -5px;
  padding: 0 2px;
  background: #fff;
  font-size: 8.2px;
  line-height: 12px;
  letter-spacing: -0.35px;
}

.tpl-row {
  height: 21px;
  display: flex;
}

.clip {
  width: 150px;
  height: 10px;
  overflow: hidden;
  text-align: right;
  line-height: 16px;
  color: #333;
}

.combo {
  width: 163px;
  height: 14px;
  margin-left: 6px;
  position: relative;
  padding: 0 3px 0 1px;
  display: flex;
  align-items: center;
  justify-content: space-between;
  border: 1px solid #6ba3bd;
  background: linear-gradient(#ebf8fd, #a9dcf2);
  font-size: 8.5px;
}

.combo-space {
  width: 163px;
  margin-left: 6px;
}

.drop {
  position: absolute;
  left: -1px;
  top: 13px;
  width: 163px;
  height: 75px;
  padding-left: 1px;
  overflow: hidden;
  list-style: none;
  border: 1px solid #333;
  border-top: 0;
  background: #fff;
  box-shadow: 2px 2px 2px #0005;
  font-size: 8.2px;
  line-height: 8.7px;
  letter-spacing: -0.6px;
  z-index: 2;
}

.drop li:first-child {
  margin-top: -4px;
}

.drop li:nth-child(n + 5) {
  letter-spacing: -0.45px;
}

.btn {
  width: 49px;
  height: 15px;
  margin-left: 4px;
  overflow: hidden;
  text-align: center;
  line-height: 14px;
  letter-spacing: 0.1px;
  border: 1px solid #777;
  border-radius: 1px;
  background: linear-gradient(#f4f4f4, #ddd);
}

.btn.dim {
  color: #666;
  border-color: #aaa;
  background: #f3f3f3;
}

.dest {
  margin-top: 9px;
  display: flex;
  gap: 9px;
}

.outputs {
  width: 80px;
  height: 130px;
  padding: 17px 0 0 11px;
}

.outputs label,
.formats label,
.copy {
  display: flex;
  align-items: center;
  gap: 4px;
  height: 14px;
}

.outputs label {
  margin-bottom: 16px;
  color: #333;
}

.chk {
  width: 13px;
  height: 13px;
  flex: none;
  border: 1px solid #999;
  background: linear-gradient(135deg, #d4d4d4, #f6f6f6);
}

.chk.on::after {
  content: "";
  display: block;
  width: 4px;
  height: 7px;
  margin: 1px 0 0 4px;
  border: solid #2b3c86;
  border-width: 0 2px 2px 0;
  transform: rotate(38deg);
}

.chk.dim {
  border-color: #b5b5b5;
  background: #f6f6f6;
}

.chk.dim.on::after {
  border-color: #aaa;
}

.file {
  width: 459px;
  height: 130px;
  padding: 6px 0 0 9px;
  color: #555;
}

.file-name {
  height: 16px;
  font-size: 11.3px;
}

.file-name span {
  margin-left: 1px;
}

.file-input {
  width: 304px;
  height: 14px;
  margin-top: 1px;
  display: flex;
  border: 1px solid #999;
  background: #f0f0f0;
  font-size: 8.2px;
  line-height: 11px;
  letter-spacing: -0.4px;
}

.val {
  flex: 1;
}

.mini {
  width: 12px;
  display: flex;
  align-items: center;
  justify-content: center;
  border-left: 1px solid #ccc;
  font-size: 11px;
}

.formats {
  margin-top: 29px;
  display: grid;
  grid-template-columns: 53px 54px 53px 60px;
}

.copy {
  margin-top: 8px;
}

.copy-row {
  display: flex;
}

.copy-input {
  width: 251px;
  height: 13px;
  margin-top: 1px;
  border: 1px solid #bbb;
  background: #efefef;
}

.dlg-foot {
  padding: 10px 13px 0;
  display: flex;
  justify-content: flex-end;
  gap: 1px;
}

.btn.low {
  line-height: 17px;
}

.dlg-foot .btn:first-child {
  margin: 0;
}

.cursor {
  position: absolute;
  left: 493px;
  top: 145px;
}
```
